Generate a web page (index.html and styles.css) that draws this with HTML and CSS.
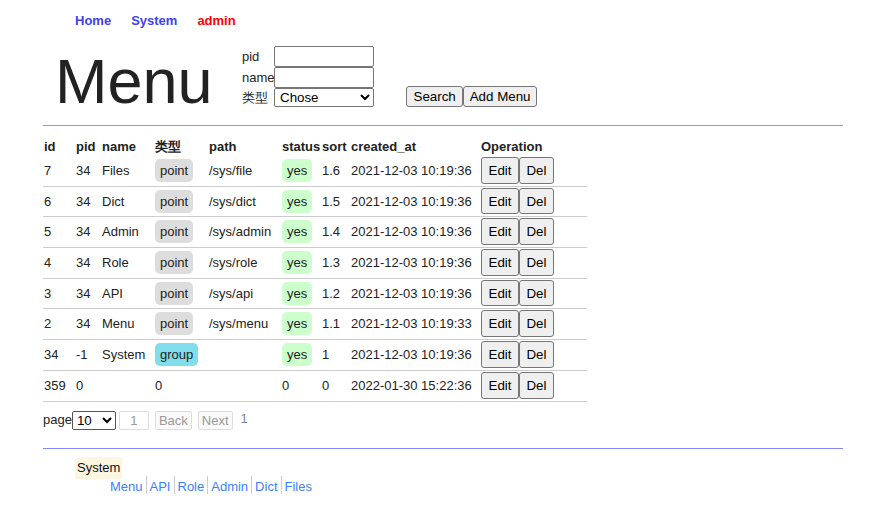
FILE: index.html
```html
<!DOCTYPE html>
<html lang="en">
<head>
<meta charset="utf-8">
<title>Menu</title>
<link rel="stylesheet" href="styles.css">
</head>
<body>
<div class="wrap">
  <nav class="nav">
    <a href="#" class="nav-link">Home</a>
    <a href="#" class="nav-link">System</a>
    <a href="#" class="nav-link nav-user">admin</a>
  </nav>

  <div class="head">
    <h1 class="title">Menu</h1>
    <form class="filter">
      <div class="fields">
        <label class="lbl">pid</label><input class="inp" type="text">
        <label class="lbl">name</label><input class="inp" type="text">
        <label class="lbl">类型</label>
        <select class="sel"><option>Chose</option></select>
      </div>
      <div class="actions">
        <button type="button" class="btn btn-search">Search</button><button type="button" class="btn btn-add">Add Menu</button>
      </div>
    </form>
  </div>

  <div class="rule"></div>

  <table class="grid">
    <thead>
      <tr>
        <th class="c-id">id</th>
        <th class="c-pid">pid</th>
        <th class="c-name">name</th>
        <th class="c-type">类型</th>
        <th class="c-path">path</th>
        <th class="c-status">status</th>
        <th class="c-sort">sort</th>
        <th class="c-created">created_at</th>
        <th class="c-op">Operation</th>
      </tr>
    </thead>
    <tbody>
      <tr><td>7</td><td>34</td><td>Files</td><td><span class="tag tag-point">point</span></td><td>/sys/file</td><td><span class="tag tag-yes">yes</span></td><td>1.6</td><td>2021-12-03 10:19:36</td><td><button class="obtn">Edit</button><button class="obtn">Del</button></td></tr>
      <tr><td>6</td><td>34</td><td>Dict</td><td><span class="tag tag-point">point</span></td><td>/sys/dict</td><td><span class="tag tag-yes">yes</span></td><td>1.5</td><td>2021-12-03 10:19:36</td><td><button class="obtn">Edit</button><button class="obtn">Del</button></td></tr>
      <tr><td>5</td><td>34</td><td>Admin</td><td><span class="tag tag-point">point</span></td><td>/sys/admin</td><td><span class="tag tag-yes">yes</span></td><td>1.4</td><td>2021-12-03 10:19:36</td><td><button class="obtn">Edit</button><button class="obtn">Del</button></td></tr>
      <tr><td>4</td><td>34</td><td>Role</td><td><span class="tag tag-point">point</span></td><td>/sys/role</td><td><span class="tag tag-yes">yes</span></td><td>1.3</td><td>2021-12-03 10:19:36</td><td><button class="obtn">Edit</button><button class="obtn">Del</button></td></tr>
      <tr><td>3</td><td>34</td><td>API</td><td><span class="tag tag-point">point</span></td><td>/sys/api</td><td><span class="tag tag-yes">yes</span></td><td>1.2</td><td>2021-12-03 10:19:36</td><td><button class="obtn">Edit</button><button class="obtn">Del</button></td></tr>
      <tr><td>2</td><td>34</td><td>Menu</td><td><span class="tag tag-point">point</span></td><td>/sys/menu</td><td><span class="tag tag-yes">yes</span></td><td>1.1</td><td>2021-12-03 10:19:33</td><td><button class="obtn">Edit</button><button class="obtn">Del</button></td></tr>
      <tr><td>34</td><td>-1</td><td>System</td><td><span class="tag tag-group">group</span></td><td></td><td><span class="tag tag-yes">yes</span></td><td>1</td><td>2021-12-03 10:19:36</td><td><button class="obtn">Edit</button><button class="obtn">Del</button></td></tr>
      <tr><td>359</td><td>0</td><td></td><td>0</td><td></td><td>0</td><td>0</td><td>2022-01-30 15:22:36</td><td><button class="obtn">Edit</button><button class="obtn">Del</button></td></tr>
    </tbody>
  </table>

  <div class="pager">
    <span class="pager-label">page</span>
    <select class="pager-size"><option>10</option></select>
    <input class="pager-num" type="text" value="1">
    <button class="pbtn" disabled>Back</button>
    <button class="pbtn" disabled>Next</button>
    <span class="pager-total">1</span>
  </div>

  <div class="rule rule-bottom"></div>

  <div class="sitemap">
    <div class="group-label">System</div>
    <div class="group-links">
      <a href="#" class="sub">Menu</a><a href="#" class="sub">API</a><a href="#" class="sub">Role</a><a href="#" class="sub">Admin</a><a href="#" class="sub">Dict</a><a href="#" class="sub">Files</a>
    </div>
  </div>
</div>
</body>
</html>
```

FILE: styles.css
```css
* { box-sizing: border-box; }

body {
  margin: 0;
  font-family: "Liberation Sans", Arial, sans-serif;
  font-size: 13px;
  line-height: 15px;
  color: #222;
  background: #fff;
}

.wrap {
  width: 800px;
  margin-left: 43px;
  padding-top: 13px;
}

.nav {
  display: flex;
  padding-left: 32px;
  height: 15px;
}
.nav-link {
  font-weight: bold;
  color: #4040f0;
  text-decoration: none;
  margin-right: 20px;
}
.nav-user { color: #f00; }

.head {
  display: flex;
  align-items: flex-start;
  margin-top: 18px;
}
.title {
  margin: 3px 0 0 12px;
  width: 187px;
  font-size: 63px;
  line-height: 64px;
  font-weight: normal;
  color: #222;
}
.filter {
  display: flex;
  align-items: flex-end;
}
.fields {
  display: grid;
  grid-template-columns: 32px 100px;
  align-items: center;
}
.lbl {
  font-size: 13px;
  color: #222;
}
.inp {
  width: 100px;
  height: 21px;
  padding: 1px 2px;
  border: 1px solid #767676;
  border-radius: 2px;
  font: 13.33px "Liberation Sans", Arial, sans-serif;
}
.sel {
  width: 100px;
  height: 19px;
  border: 1px solid #767676;
  border-radius: 2px;
  font: 13.33px "Liberation Sans", Arial, sans-serif;
  color: #000;
  background: #fff;
  padding: 0 0 0 1px;
}
.actions {
  margin-left: 32px;
  display: flex;
}
.btn {
  height: 21px;
  padding: 1px 6px;
  font: 13.33px "Liberation Sans", Arial, sans-serif;
  color: #000;
  background: #efefef;
  border: 1px solid #767676;
  border-radius: 3px;
}
.btn-search { padding: 1px 6.5px; }
.btn-add { padding: 1px 5.5px; }

.rule {
  height: 1px;
  background: #9494ea;
  margin: 12px 0 10px;
}

.grid {
  border-collapse: collapse;
  table-layout: fixed;
  width: 544px;
}
.grid th {
  text-align: left;
  font-weight: bold;
  padding: 3px 0 2px 1px;
  line-height: 15px;
}
.grid td {
  padding: 1px 0 2px 1px;
  border-bottom: 1px solid #ccc;
  vertical-align: middle;
  white-space: nowrap;
  line-height: 15px;
}
.c-id { width: 32px; }
.c-pid { width: 26px; }
.c-name { width: 53px; }
.c-type { width: 54px; }
.c-path { width: 73px; }
.c-status { width: 40px; }
.c-sort { width: 29px; }
.c-created { width: 130px; }
.c-op { width: 107px; }

.tag {
  display: inline-block;
  padding: 4px 5px;
  border-radius: 5px;
  line-height: 15px;
  vertical-align: middle;
}
.tag-point { background: #dddddd; }
.tag-yes { background: #ccffcc; }
.tag-group { background: #80deea; }

.obtn {
  height: 26.7px;
  padding: 0 6.5px;
  font: 13.33px "Liberation Sans", Arial, sans-serif;
  color: #000;
  background: #efefef;
  border: 1px solid #767676;
  border-radius: 3px;
  vertical-align: middle;
}

.pager {
  display: flex;
  align-items: center;
  margin-top: 9px;
  height: 20px;
}
.pager-label { position: relative; top: -1px; }
.pager-size {
  width: 44px;
  height: 19px;
  border: 1px solid #555;
  border-radius: 2px;
  font: 13.33px "Liberation Sans", Arial, sans-serif;
  color: #000;
  background: #fff;
  padding: 0;
}
.pager-num {
  width: 30px;
  height: 19px;
  margin-left: 3px;
  border: 1px solid #ddd;
  border-radius: 2px;
  text-align: center;
  color: #999;
  font: 13px "Liberation Sans", Arial, sans-serif;
  padding: 0;
}
.pbtn {
  height: 19px;
  margin-left: 6px;
  padding: 0 3px;
  border: 1px solid #ddd;
  border-radius: 2px;
  background: #fafafa;
  color: #999;
  font: 13px "Liberation Sans", Arial, sans-serif;
}
.pager-total {
  margin-left: 8px;
  color: #778899;
  position: relative;
  top: -2px;
}

.rule-bottom {
  background: #8686f8;
  margin: 17px 0 8px;
}

.group-label {
  display: inline-block;
  margin-left: 32px;
  padding: 3px 2px 4px 2px;
  background: #fcf5e0;
  color: #111;
}
.group-links {
  padding-left: 64px;
}
.sub {
  color: #3d7fff;
  text-decoration: none;
  padding: 3px 3px;
  border-left: 1px solid #ccc;
}
.sub:first-child { border-left: 0; }
```
